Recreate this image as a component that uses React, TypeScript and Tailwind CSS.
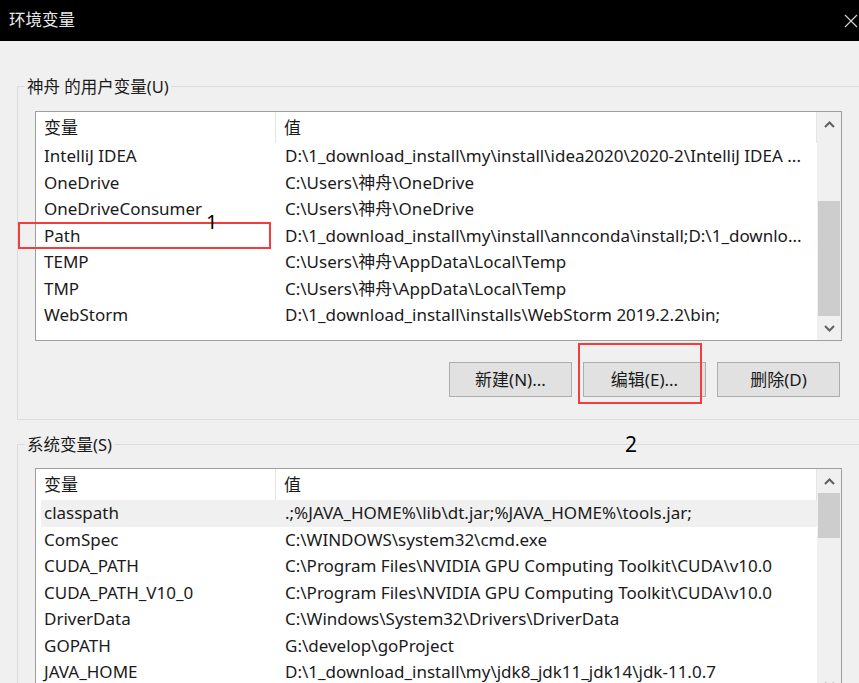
const userVars: [string, string][] = [
  ["IntelliJ IDEA", "D:\\1_download_install\\my\\install\\idea2020\\2020-2\\IntelliJ IDEA ..."],
  ["OneDrive", "C:\\Users\\神舟\\OneDrive"],
  ["OneDriveConsumer", "C:\\Users\\神舟\\OneDrive"],
  ["Path", "D:\\1_download_install\\my\\install\\annconda\\install;D:\\1_downlo..."],
  ["TEMP", "C:\\Users\\神舟\\AppData\\Local\\Temp"],
  ["TMP", "C:\\Users\\神舟\\AppData\\Local\\Temp"],
  ["WebStorm", "D:\\1_download_install\\installs\\WebStorm 2019.2.2\\bin;"],
];

const sysVars: [string, string][] = [
  ["classpath", ".;%JAVA_HOME%\\lib\\dt.jar;%JAVA_HOME%\\tools.jar;"],
  ["ComSpec", "C:\\WINDOWS\\system32\\cmd.exe"],
  ["CUDA_PATH", "C:\\Program Files\\NVIDIA GPU Computing Toolkit\\CUDA\\v10.0"],
  ["CUDA_PATH_V10_0", "C:\\Program Files\\NVIDIA GPU Computing Toolkit\\CUDA\\v10.0"],
  ["DriverData", "C:\\Windows\\System32\\Drivers\\DriverData"],
  ["GOPATH", "G:\\develop\\goProject"],
  ["JAVA_HOME", "D:\\1_download_install\\my\\jdk8_jdk11_jdk14\\jdk-11.0.7"],
];

function Chevron({ up }: { up?: boolean }) {
  return (
    <svg width="11" height="7" viewBox="0 0 11 7" fill="none" stroke="#606060" strokeWidth="2">
      {up ? <path d="M1 6 L5.5 1.5 L10 6" /> : <path d="M1 1 L5.5 5.5 L10 1" />}
    </svg>
  );
}

function Scrollbar({ gap, thumb }: { gap: number; thumb: number }) {
  return (
    <div className="w-[24px] bg-[#f0f0f0] flex flex-col">
      <div className="h-[24px] flex items-center justify-center">
        <Chevron up />
      </div>
      <div className="flex-1 flex flex-col px-[1px]">
        <div style={{ height: gap }} />
        <div className="bg-[#cdcdcd]" style={{ height: thumb }} />
      </div>
      <div className="h-[24px] flex items-center justify-center">
        <Chevron />
      </div>
    </div>
  );
}

function VarList({
  rows,
  highlight,
  gap,
  thumb,
}: {
  rows: [string, string][];
  highlight?: number;
  gap: number;
  thumb: number;
}) {
  return (
    <div className="w-[807px] h-[230px] border border-[#a0a0a0] bg-white flex overflow-hidden text-[17px]">
      <div className="flex-1 flex flex-col">
        <div className="h-[31px] flex items-center ml-[5px] shrink-0">
          <div className="w-[235px] h-full pl-[3px] flex items-center border-r border-[#e5e5e5]">变量</div>
          <div className="flex-1 h-full pl-[8px] flex items-center border-r border-[#e5e5e5]">值</div>
        </div>
        {rows.map(([name, value], i) => (
          <div
            key={name}
            className={`h-[26.5px] shrink-0 flex items-center ml-[5px] pl-[3px] pb-[1px] whitespace-nowrap ${
              i === highlight ? "bg-[#f0f0f0]" : ""
            }`}
          >
            <div className="w-[241px]">{name}</div>
            <div>{value}</div>
          </div>
        ))}
      </div>
      <Scrollbar gap={gap} thumb={thumb} />
    </div>
  );
}

function Btn({ label }: { label: string }) {
  return (
    <div className="w-[123px] h-[35px] bg-[#e1e1e1] border border-[#adadad] flex items-center justify-center text-[17px]">
      {label}
    </div>
  );
}

export default function App() {
  return (
    <div
      className="relative w-[859px] h-[683px] overflow-hidden bg-[#f0f0f0] text-[16.5px] text-[#1a1a1a]"
      style={{ fontFamily: '"Noto Sans", "Noto Sans CJK SC", sans-serif' }}
    >
      <div className="h-[41px] bg-black flex items-center justify-between pl-[9px] pr-[1px]">
        <span className="text-[#e8e8e8] text-[16.5px]">环境变量</span>
        <svg width="14" height="14" viewBox="0 0 14 14" stroke="#d0d0d0" strokeWidth="1.2">
          <path d="M1 1 L13 13 M13 1 L1 13" />
        </svg>
      </div>

      <div className="pl-[17px] pt-[45px]">
        <div className="w-[870px] h-[334px] border border-[#dcdcdc] flex flex-col">
          <div className="-mt-[11px] ml-[7px] px-[2px] w-fit bg-[#f0f0f0] leading-[22px]">神舟 的用户变量(U)</div>
          <div className="mt-[13px] ml-[17px]">
            <VarList rows={userVars} gap={65} thumb={115} />
          </div>
          <div className="mt-[21px] ml-[431px] flex gap-[11px]">
            <Btn label="新建(N)..." />
            <Btn label="编辑(E)..." />
            <Btn label="删除(D)" />
          </div>
        </div>

        <div className="mt-[24px] w-[870px] h-[300px] border border-[#dcdcdc] flex flex-col">
          <div className="-mt-[11px] ml-[7px] px-[2px] w-fit bg-[#f0f0f0] leading-[22px]">系统变量(S)</div>
          <div className="mt-[12px] ml-[17px]">
            <VarList rows={sysVars} highlight={0} gap={0} thumb={45} />
          </div>
        </div>
      </div>

      {/* annotations */}
      <div className="absolute left-[18px] top-[222px] w-[253px] h-[27px] border-2 border-[#f43c3c]" />
      <div className="absolute left-[206px] top-[208px] text-[20px] leading-[28px] text-black">1</div>
      <div className="absolute left-[578px] top-[343px] w-[124px] h-[61px] border-2 border-[#f43c3c]" />
      <div className="absolute left-[625px] top-[430px] text-[21px] leading-[28px] text-black">2</div>
    </div>
  );
}
